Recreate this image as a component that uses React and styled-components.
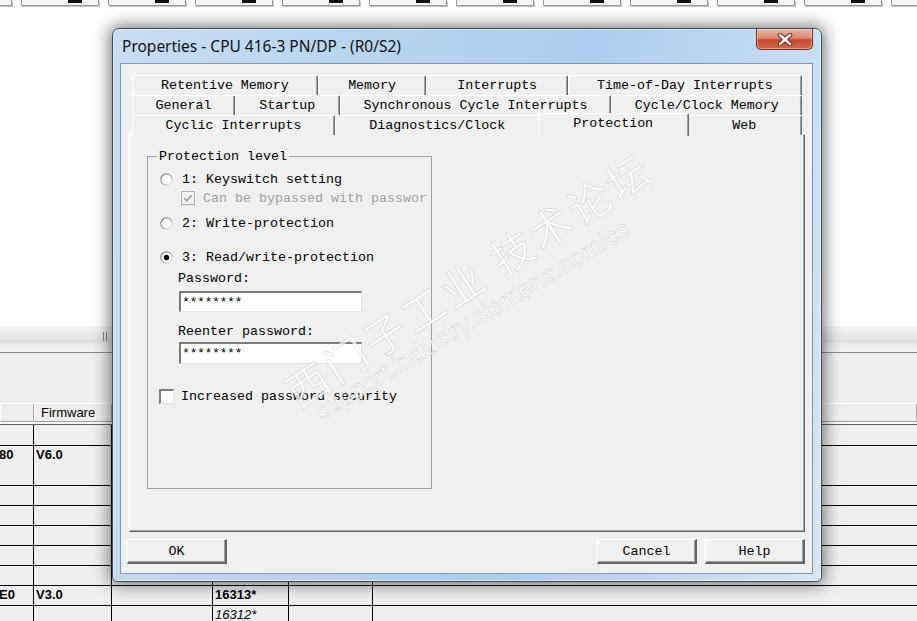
import React from 'react';
import styled, { createGlobalStyle } from 'styled-components';

const GlobalStyle = createGlobalStyle`
  html, body { margin: 0; padding: 0; }
  body { background: #fff; font-family: "Liberation Sans", Arial, sans-serif; }
`;

const MONO = `"Liberation Mono", "DejaVu Sans Mono", monospace`;

const tabRows = [
  [['Retentive Memory', 186], ['Memory', 108], ['Interrupts', 141], ['Time-of-Day Interrupts', 235]],
  [['General', 102], ['Startup', 104], ['Synchronous Cycle Interrupts', 273], ['Cycle/Clock Memory', 191]],
  [['Cyclic Interrupts', 202], ['Diagnostics/Clock', 204], ['Protection', 150], ['Web', 114]],
];

const bodyRows = [
  { h: 21, cells: [] },
  { h: 40, cells: ['80', 'V6.0'] },
  { h: 20, cells: [] },
  { h: 20, cells: [] },
  { h: 20, cells: [] },
  { h: 20, cells: [] },
  { h: 20, cells: [] },
  { h: 20, cells: ['E0', 'V3.0', '', '16313*'] },
  { h: 20, cells: ['', '', '', '16312*'], italic: true },
];

const Page = styled.div`
  position: relative;
  width: 917px;
  height: 621px;
  overflow: hidden;
  background: #fff;
  display: flex;
  flex-direction: column;
`;

const TopStrip = styled.div`
  display: flex;
  align-items: flex-start;
  gap: 9px;
  margin-left: -66px;
  height: 326px;
  flex: none;
`;

const StripButton = styled.div`
  flex: none;
  box-sizing: border-box;
  width: 78px;
  height: 6px;
  background: #f6f6f6;
  border: 1px solid #9a9a9a;
  border-top: none;
  box-shadow: 1px 1px 0 #c4c4c4;
  display: flex;
  justify-content: flex-end;
  padding-right: 16px;
`;

const StripKnob = styled.div`
  width: 14px;
  height: 3px;
  background: #111;
`;

const Lower = styled.div`
  flex: 1;
  background: #efefef;
  display: flex;
  flex-direction: column;
`;

const Toolbar = styled.div`
  height: 26px;
  flex: none;
  background: linear-gradient(#f4f4f4, #e0e0e0 65%, #ebebeb 66%, #f2f2f2);
  border-bottom: 1px solid #8a8a8a;
  display: flex;
  align-items: center;
  padding-left: 103px;
`;

const Grip = styled.div`
  width: 2px;
  height: 9px;
  border-left: 1px solid #8c8c8c;
  border-right: 1px solid #8c8c8c;
  margin-top: -6px;
`;

const Blank = styled.div`
  height: 50px;
  flex: none;
`;

const Grid = styled.div`
  display: grid;
  grid-template-columns: 34px 78px 101px 76px 84px 1fr;
`;

const HeadCell = styled.div`
  box-sizing: border-box;
  height: 19px;
  border-top: 1px solid #fff;
  border-left: 1px solid #fff;
  border-right: 1px solid #a8a8a8;
  border-bottom: 1px solid #a0a0a0;
  font-size: 13px;
  line-height: 17px;
  padding-left: 6px;
  color: #000;
  white-space: nowrap;
  overflow: hidden;
`;

const HeadDivider = styled.div`
  grid-column: 1 / -1;
  height: 3px;
  border-bottom: 1px solid #5e5e5e;
  box-sizing: border-box;
  background: #f7f7f7;
`;

const Cell = styled.div`
  box-sizing: border-box;
  height: ${(p) => p.$h}px;
  border-right: ${(p) => (p.$last ? 'none' : '1px solid #000')};
  border-bottom: 1px solid #000;
  font-size: 13px;
  font-weight: ${(p) => (p.$italic ? 'normal' : 'bold')};
  font-style: ${(p) => (p.$italic ? 'italic' : 'normal')};
  line-height: 18px;
  padding-left: 2px;
  white-space: nowrap;
  overflow: hidden;
  color: #000;
`;

const LeadText = styled.span`
  margin-left: -3px;
`;

const Window = styled.div`
  position: absolute;
  left: 112px;
  top: 28px;
  width: 710px;
  height: 554px;
  box-sizing: border-box;
  border: 1px solid #3d4b5c;
  border-radius: 7px 7px 5px 5px;
  background: linear-gradient(100deg, #c9def3 0%, #b7d3ef 35%, #aecdee 60%, #c5dcf3 85%, #d6e7f8 100%);
  box-shadow: 0 0 16px 3px rgba(0, 0, 0, 0.5), inset 0 0 0 1px rgba(255, 255, 255, 0.55);
  display: flex;
  flex-direction: column;
  padding: 0 8px 7px 7px;
`;

const TitleBar = styled.div`
  height: 34px;
  flex: none;
  display: flex;
  justify-content: space-between;
  align-items: flex-start;
`;

const TitleText = styled.div`
  padding-left: 2px;
  margin-top: 8px;
  font-family: "Noto Sans", "Liberation Sans", sans-serif;
  font-size: 15.5px;
  line-height: 18px;
  color: #111;
`;

const CloseButton = styled.div`
  width: 57px;
  height: 21px;
  box-sizing: border-box;
  border: 1px solid #7a2a1c;
  border-top: none;
  border-radius: 0 0 5px 5px;
  background: linear-gradient(#eab3a4, #d98a74 45%, #c74a2d 55%, #d46a4e);
  box-shadow: inset 0 0 0 1px rgba(255, 255, 255, 0.35);
  display: flex;
  align-items: center;
  justify-content: center;
`;

const Client = styled.div`
  flex: 1;
  box-sizing: border-box;
  background: #f0f0f0;
  border: 1px solid #8597ac;
  padding: 11px 7px 0 6px;
  display: flex;
  flex-direction: column;
  font-family: ${MONO};
  font-size: 13.33px;
  color: #000;
`;

const TabControl = styled.div`
  margin-left: 2px;
  display: flex;
  flex-direction: column;
`;

const TabRow = styled.div`
  display: flex;
  height: 20px;
  margin: 0 3px;
`;

const Tab = styled.div`
  flex: ${(p) => p.$w} 1 0;
  box-sizing: border-box;
  position: relative;
  z-index: ${(p) => (p.$active ? 2 : 0)};
  height: ${(p) => (p.$active ? 23 : 20)}px;
  margin: ${(p) => (p.$active ? '-2px -2px 0 -2px' : '0')};
  padding-bottom: ${(p) => (p.$active ? 3 : 0)}px;
  background: #f0f0f0;
  border-top: 1px solid #fff;
  border-left: 1px solid #fff;
  border-right: 1px solid #696969;
  border-radius: 2px 2px 0 0;
  box-shadow: inset -1px 0 0 #a0a0a0;
  display: flex;
  align-items: center;
  justify-content: center;
  white-space: nowrap;
`;

const Panel = styled.div`
  margin-top: -1px;
  height: 398px;
  box-sizing: border-box;
  border-top: 1px solid #fff;
  border-left: 1px solid #fff;
  border-right: 1px solid #696969;
  border-bottom: 1px solid #696969;
  box-shadow: inset -1px -1px 0 #a0a0a0;
  margin-left: 2px;
  padding: 21px 0 0 17px;
`;

const GroupBox = styled.div`
  position: relative;
  width: 285px;
  height: 333px;
  box-sizing: border-box;
  border: 1px solid #a0a0a0;
  padding: 14px 0 0 12px;
  display: flex;
  flex-direction: column;
  align-items: flex-start;
`;

const GroupLabel = styled.div`
  position: absolute;
  top: -8px;
  left: 9px;
  padding: 0 2px;
  background: #f0f0f0;
  line-height: 16px;
`;

const Option = styled.div`
  display: flex;
  align-items: center;
  height: 16px;
  margin-top: ${(p) => p.$mt || 0}px;
  margin-left: ${(p) => p.$ml || 0}px;
  gap: ${(p) => p.$gap || 9}px;
  color: ${(p) => (p.$disabled ? '#a3a3a3' : '#000')};
  white-space: nowrap;
`;

const FieldLabel = styled.div`
  height: 16px;
  line-height: 16px;
  margin-top: ${(p) => p.$mt}px;
  margin-left: 18px;
`;

const TextBox = styled.div`
  box-sizing: border-box;
  width: 183px;
  height: ${(p) => p.$h}px;
  margin-top: ${(p) => p.$mt}px;
  margin-left: 19px;
  background: #fff;
  border-top: 2px solid #7a7a7a;
  border-left: 2px solid #7a7a7a;
  border-right: 1px solid #e3e3e3;
  border-bottom: 1px solid #e3e3e3;
  display: flex;
  align-items: center;
  padding-left: 1px;
  letter-spacing: -0.5px;
`;

const Box = styled.span`
  box-sizing: border-box;
  width: 15px;
  height: 15px;
  background: #fff;
  border-top: 2px solid #7d7d7d;
  border-left: 2px solid #7d7d7d;
  border-right: 1px solid #e6e6e6;
  border-bottom: 1px solid #e6e6e6;
`;

const ButtonRow = styled.div`
  display: flex;
  align-items: center;
  margin-top: 7px;
  gap: 8px;
`;

const Button = styled.div`
  box-sizing: border-box;
  width: ${(p) => p.$w}px;
  height: 25px;
  margin-right: ${(p) => (p.$push ? 'auto' : '0')};
  border-top: 1px solid #fff;
  border-left: 1px solid #fff;
  border-right: 2px solid #646464;
  border-bottom: 2px solid #646464;
  box-shadow: inset -1px -1px 0 #a0a0a0;
  display: flex;
  align-items: center;
  justify-content: center;
`;

const Watermark = styled.div`
  position: absolute;
  left: ${(p) => p.$x}px;
  top: ${(p) => p.$y}px;
  transform: translate(-50%, -50%) rotate(${(p) => p.$r}deg);
  font-family: ${(p) => (p.$cjk ? '"Noto Sans CJK SC", "Noto Sans", sans-serif' : '"Liberation Sans", Arial, sans-serif')};
  font-size: ${(p) => p.$size}px;
  letter-spacing: ${(p) => p.$ls || 0}px;
  white-space: nowrap;
  color: rgba(255, 255, 255, 0.75);
  -webkit-text-stroke: 0.7px rgba(150, 150, 150, 0.32);
  pointer-events: none;
`;

const RadioIcon = ({ checked }) => (
  <svg width="13" height="13" viewBox="0 0 13 13">
    <defs>
      <linearGradient id="radioRing" x1="0" y1="0" x2="1" y2="1">
        <stop offset="0" stopColor="#737373" />
        <stop offset="0.55" stopColor="#b5b5b5" />
        <stop offset="1" stopColor="#f2f2f2" />
      </linearGradient>
    </defs>
    <circle cx="6.5" cy="6.5" r="5.6" fill="#fff" stroke="url(#radioRing)" strokeWidth="1.3" />
    {checked && <circle cx="6.5" cy="6.5" r="2.7" fill="#000" />}
  </svg>
);

const CheckIcon = () => (
  <svg width="14" height="14" viewBox="0 0 14 14">
    <rect x="0.5" y="0.5" width="13" height="13" fill="#f2f2f2" stroke="#b0b0b0" />
    <path d="M3.3 7.2 L5.8 9.7 L10.6 4.2" fill="none" stroke="#a0a0a0" strokeWidth="1.7" />
  </svg>
);

const CloseX = () => (
  <svg width="16" height="13" viewBox="0 0 16 13">
    <path d="M3 2 L13 11 M13 2 L3 11" stroke="#6d1f10" strokeWidth="4.6" strokeLinecap="round" />
    <path d="M3 2 L13 11 M13 2 L3 11" stroke="#fff" strokeWidth="2.6" strokeLinecap="round" />
  </svg>
);

const App = () => {
  const strip = Array.from({ length: 12 });

  return (
    <Page>
      <GlobalStyle />
      <TopStrip>
        {strip.map((_, i) => (
          <StripButton key={i}>
            <StripKnob />
          </StripButton>
        ))}
      </TopStrip>
      <Lower>
        <Toolbar>
          <Grip />
        </Toolbar>
        <Blank />
        <Grid>
          <HeadCell />
          <HeadCell>Firmware</HeadCell>
          <HeadCell />
          <HeadCell />
          <HeadCell />
          <HeadCell />
          <HeadDivider />
          {bodyRows.map((row, r) =>
            [0, 1, 2, 3, 4, 5].map((c) => (
              <Cell key={`${r}-${c}`} $h={row.h} $last={c === 5} $italic={row.italic && c === 3}>
                {c === 0 && row.cells[0] ? <LeadText>{row.cells[0]}</LeadText> : row.cells[c] || ''}
              </Cell>
            ))
          )}
        </Grid>
      </Lower>

      <Window>
        <TitleBar>
          <TitleText>Properties - CPU 416-3 PN/DP - (R0/S2)</TitleText>
          <CloseButton>
            <CloseX />
          </CloseButton>
        </TitleBar>
        <Client>
          <TabControl>
            {tabRows.map((row, i) => (
              <TabRow key={i}>
                {row.map(([label, w]) => (
                  <Tab key={label} $w={w} $active={label === 'Protection'}>
                    {label}
                  </Tab>
                ))}
              </TabRow>
            ))}
          </TabControl>
          <Panel>
            <GroupBox>
              <GroupLabel>Protection level</GroupLabel>
              <Option>
                <RadioIcon />
                1: Keyswitch setting
              </Option>
              <Option $mt={3} $ml={21} $gap={8} $disabled>
                <CheckIcon />
                Can be bypassed with passwor
              </Option>
              <Option $mt={9}>
                <RadioIcon />
                2: Write-protection
              </Option>
              <Option $mt={18}>
                <RadioIcon checked />
                3: Read/write-protection
              </Option>
              <FieldLabel $mt={6}>Password:</FieldLabel>
              <TextBox $mt={4} $h={21}>********</TextBox>
              <FieldLabel $mt={12}>Reenter password:</FieldLabel>
              <TextBox $mt={2} $h={22}>********</TextBox>
              <Option $mt={24} $ml={-1} $gap={7}>
                <Box />
                Increased password security
              </Option>
            </GroupBox>
          </Panel>
          <ButtonRow>
            <Button $w={100} $push>OK</Button>
            <Button $w={100}>Cancel</Button>
            <Button $w={100}>Help</Button>
          </ButtonRow>
        </Client>
      </Window>

      <Watermark $x={468} $y={278} $r={-33} $size={42} $ls={4} $cjk>
        西门子工业  技术论坛
      </Watermark>
      <Watermark $x={472} $y={320} $r={-31} $size={25}>
        support.industry.siemens.com/cs
      </Watermark>
    </Page>
  );
};

export default App;
